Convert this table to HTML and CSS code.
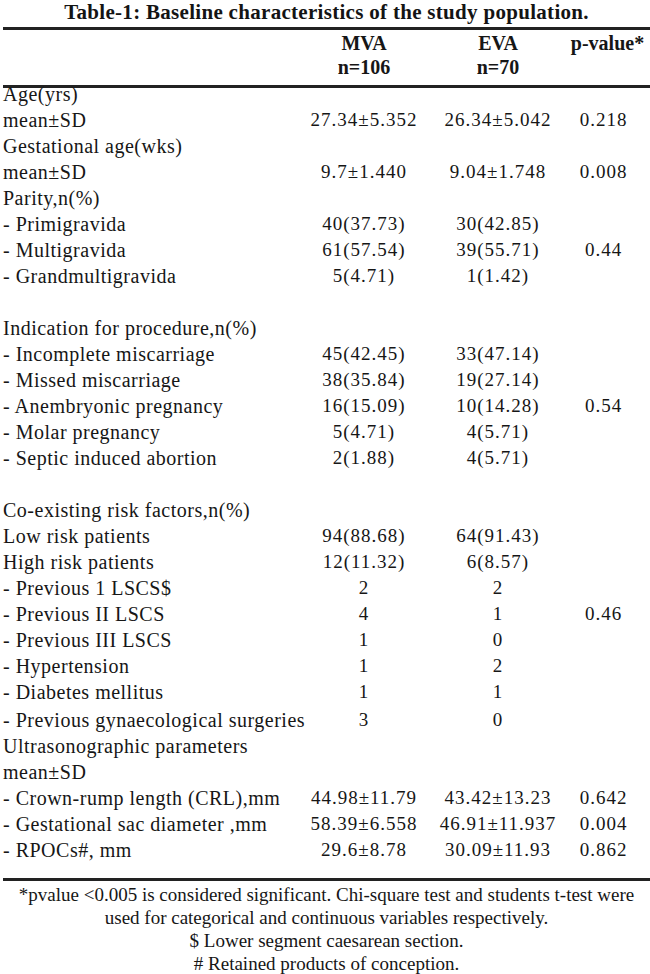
FILE: index.html
```html
<!DOCTYPE html>
<html lang="en">
<head>
<meta charset="utf-8">
<title>Table-1: Baseline characteristics of the study population.</title>
<link rel="stylesheet" href="styles.css">
</head>
<body>
<main class="doc">
  <h1 class="title">Table-1: Baseline characteristics of the study population.</h1>
  <table class="tbl">
    <colgroup>
      <col class="c-label">
      <col class="c-mva">
      <col class="c-eva">
      <col class="c-p">
    </colgroup>
    <thead>
      <tr class="h1">
        <th></th><th>MVA</th><th>EVA</th><th class="pv">p-value*</th>
      </tr>
      <tr class="h2">
        <th></th><th>n=106</th><th>n=70</th><th></th>
      </tr>
    </thead>
    <tbody>
      <tr><td>Age(yrs)</td><td></td><td></td><td></td></tr>
      <tr><td>mean±SD</td><td class="num">27.34±5.352</td><td class="num">26.34±5.042</td><td class="num p">0.218</td></tr>
      <tr><td>Gestational age(wks)</td><td></td><td></td><td></td></tr>
      <tr><td>mean±SD</td><td class="num">9.7±1.440</td><td class="num">9.04±1.748</td><td class="num p">0.008</td></tr>
      <tr><td>Parity,n(%)</td><td></td><td></td><td></td></tr>
      <tr><td>- Primigravida</td><td class="num">40(37.73)</td><td class="num">30(42.85)</td><td></td></tr>
      <tr><td>- Multigravida</td><td class="num">61(57.54)</td><td class="num">39(55.71)</td><td class="num p">0.44</td></tr>
      <tr><td>- Grandmultigravida</td><td class="num">5(4.71)</td><td class="num">1(1.42)</td><td></td></tr>
      <tr><td></td><td></td><td></td><td></td></tr>
      <tr><td>Indication for procedure,n(%)</td><td></td><td></td><td></td></tr>
      <tr><td>- Incomplete miscarriage</td><td class="num">45(42.45)</td><td class="num">33(47.14)</td><td></td></tr>
      <tr><td>- Missed miscarriage</td><td class="num">38(35.84)</td><td class="num">19(27.14)</td><td></td></tr>
      <tr><td>- Anembryonic pregnancy</td><td class="num">16(15.09)</td><td class="num">10(14.28)</td><td class="num p">0.54</td></tr>
      <tr><td>- Molar pregnancy</td><td class="num">5(4.71)</td><td class="num">4(5.71)</td><td></td></tr>
      <tr><td>- Septic induced abortion</td><td class="num">2(1.88)</td><td class="num">4(5.71)</td><td></td></tr>
      <tr><td></td><td></td><td></td><td></td></tr>
      <tr><td>Co-existing risk factors,n(%)</td><td></td><td></td><td></td></tr>
      <tr><td>Low risk patients</td><td class="num">94(88.68)</td><td class="num">64(91.43)</td><td></td></tr>
      <tr><td>High risk patients</td><td class="num">12(11.32)</td><td class="num">6(8.57)</td><td></td></tr>
      <tr><td>- Previous 1 LSCS$</td><td class="num">2</td><td class="num">2</td><td></td></tr>
      <tr><td>- Previous II LSCS</td><td class="num">4</td><td class="num">1</td><td class="num p">0.46</td></tr>
      <tr><td>- Previous III LSCS</td><td class="num">1</td><td class="num">0</td><td></td></tr>
      <tr><td>- Hypertension</td><td class="num">1</td><td class="num">2</td><td></td></tr>
      <tr><td>- Diabetes mellitus</td><td class="num">1</td><td class="num">1</td><td></td></tr>
      <tr class="gap"><td>- Previous gynaecological surgeries</td><td class="num">3</td><td class="num">0</td><td></td></tr>
      <tr><td>Ultrasonographic parameters</td><td></td><td></td><td></td></tr>
      <tr><td>mean±SD</td><td></td><td></td><td></td></tr>
      <tr><td>- Crown-rump length (CRL),mm</td><td class="num">44.98±11.79</td><td class="num">43.42±13.23</td><td class="num p">0.642</td></tr>
      <tr><td>- Gestational sac diameter ,mm</td><td class="num">58.39±6.558</td><td class="num">46.91±11.937</td><td class="num p">0.004</td></tr>
      <tr class="last"><td>- RPOCs#, mm</td><td class="num">29.6±8.78</td><td class="num">30.09±11.93</td><td class="num p">0.862</td></tr>
    </tbody>
  </table>
  <div class="notes">
    <p>*pvalue &lt;0.005 is considered significant. Chi-square test and students t-test were</p>
    <p>used for categorical and continuous variables respectively.</p>
    <p>$ Lower segment caesarean section.</p>
    <p># Retained products of conception.</p>
  </div>
</main>
</body>
</html>
```

FILE: styles.css
```css
html, body {
  margin: 0;
  padding: 0;
  background: #ffffff;
}

.doc {
  width: 650px;
  padding-left: 3px;
  box-sizing: border-box;
  font-family: "Liberation Serif", "Times New Roman", serif;
  color: #161616;
}

.title {
  margin: 0;
  height: 27px;
  font-size: 21px;
  line-height: 24px;
  font-weight: bold;
  letter-spacing: 0.3px;
  text-align: center;
  color: #141414;
}

.tbl {
  width: 647px;
  table-layout: fixed;
  border-collapse: collapse;
  border-spacing: 0;
}

.c-label { width: 294px; }
.c-mva { width: 134px; }
.c-eva { width: 134px; }
.c-p { width: 85px; }

thead {
  border-top: 3px solid #222;
  border-bottom: 3px solid #222;
}

th {
  padding: 0;
  font-size: 20px;
  font-weight: bold;
  line-height: 24px;
  text-align: center;
  vertical-align: top;
}

.h1 th { padding-top: 1px; }
.h2 th { padding-bottom: 6px; }

tbody {
  border-bottom: 3px solid #222;
}

td {
  padding: 0;
  height: 26px;
  font-size: 20px;
  line-height: 12px;
  letter-spacing: 0.5px;
  vertical-align: top;
  white-space: nowrap;
}

td.num {
  font-size: 19px;
  text-align: center;
  letter-spacing: 1px;
}

td.p {
  padding-right: 8px;
}

tr.gap td {
  height: 28px;
  padding-top: 2px;
  box-sizing: border-box;
}

tr.last td {
  height: 34px;
}

.notes {
  padding-top: 2px;
  text-align: center;
}

.notes p {
  margin: 0;
  font-size: 19px;
  line-height: 23px;
}
```
